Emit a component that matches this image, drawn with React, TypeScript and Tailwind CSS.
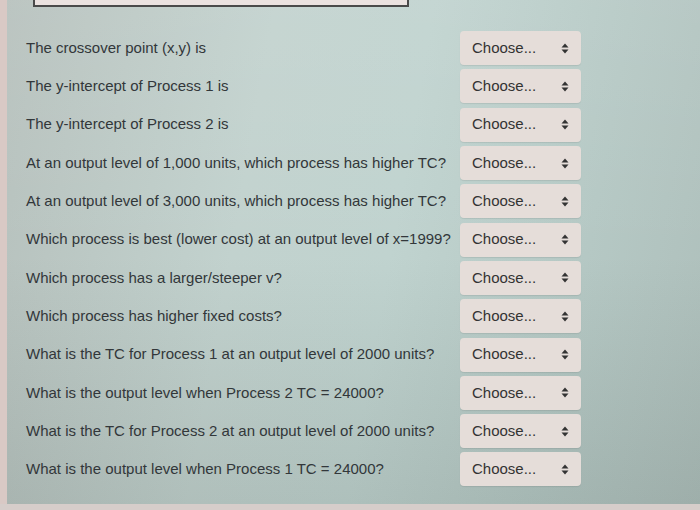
import React from "react";

const rows = [
  "The crossover point (x,y) is",
  "The y-intercept of Process 1 is",
  "The y-intercept of Process 2 is",
  "At an output level of 1,000 units, which process has higher TC?",
  "At an output level of 3,000 units, which process has higher TC?",
  "Which process is best (lower cost) at an output level of x=1999?",
  "Which process has a larger/steeper v?",
  "Which process has higher fixed costs?",
  "What is the TC for Process 1 at an output level of 2000 units?",
  "What is the output level when Process 2 TC = 24000?",
  "What is the TC for Process 2 at an output level of 2000 units?",
  "What is the output level when Process 1 TC = 24000?",
];

function Arrows() {
  return (
    <svg width="8" height="11" viewBox="0 0 8 11" className="shrink-0">
      <path d="M4 0.5 L7.5 4.5 L0.5 4.5 Z" fill="#333" />
      <path d="M4 10.5 L7.5 6.5 L0.5 6.5 Z" fill="#333" />
    </svg>
  );
}

export default function App() {
  return (
    <div
      className="relative w-[700px] h-[510px] overflow-hidden bg-[linear-gradient(100deg,#b6c0bc_0%,#c2d2ce_35%,#c0d3cf_55%,#b5c8c4_80%,#aebfbb_100%)]"
      style={{ fontFamily: '"Liberation Sans", Arial, sans-serif' }}
    >
      <div className="absolute inset-0 bg-[linear-gradient(180deg,rgba(255,255,255,0.08)_0%,rgba(0,0,0,0)_50%,rgba(40,50,45,0.12)_100%)]" />
      <div className="absolute left-0 top-0 h-full w-[7px] bg-[#d9c9c5]" />
      <div className="absolute left-0 bottom-0 w-full h-[6px] bg-[#d6cdca]" />
      <div className="absolute left-[33px] top-[-4px] w-[376px] h-[11px] border-2 border-[#4a4a4a] bg-[#ebe2e0]" />

      <div className="relative flex flex-col gap-[4px] pt-[31px] pl-[26px]">
        {rows.map((r, i) => (
          <div key={i} className="flex items-center h-[34.3px]">
            <div className="w-[434px] text-[15px] text-[#32373a] whitespace-nowrap">{r}</div>
            <div className="flex items-center justify-between w-[121px] h-[34px] rounded-[4px] bg-[#e5ddd9] pl-[12px] pr-[12px] shadow-[0_1px_1px_rgba(0,0,0,0.08)]">
              <span className="text-[15px] text-[#333]">Choose...</span>
              <Arrows />
            </div>
          </div>
        ))}
      </div>
    </div>
  );
}
